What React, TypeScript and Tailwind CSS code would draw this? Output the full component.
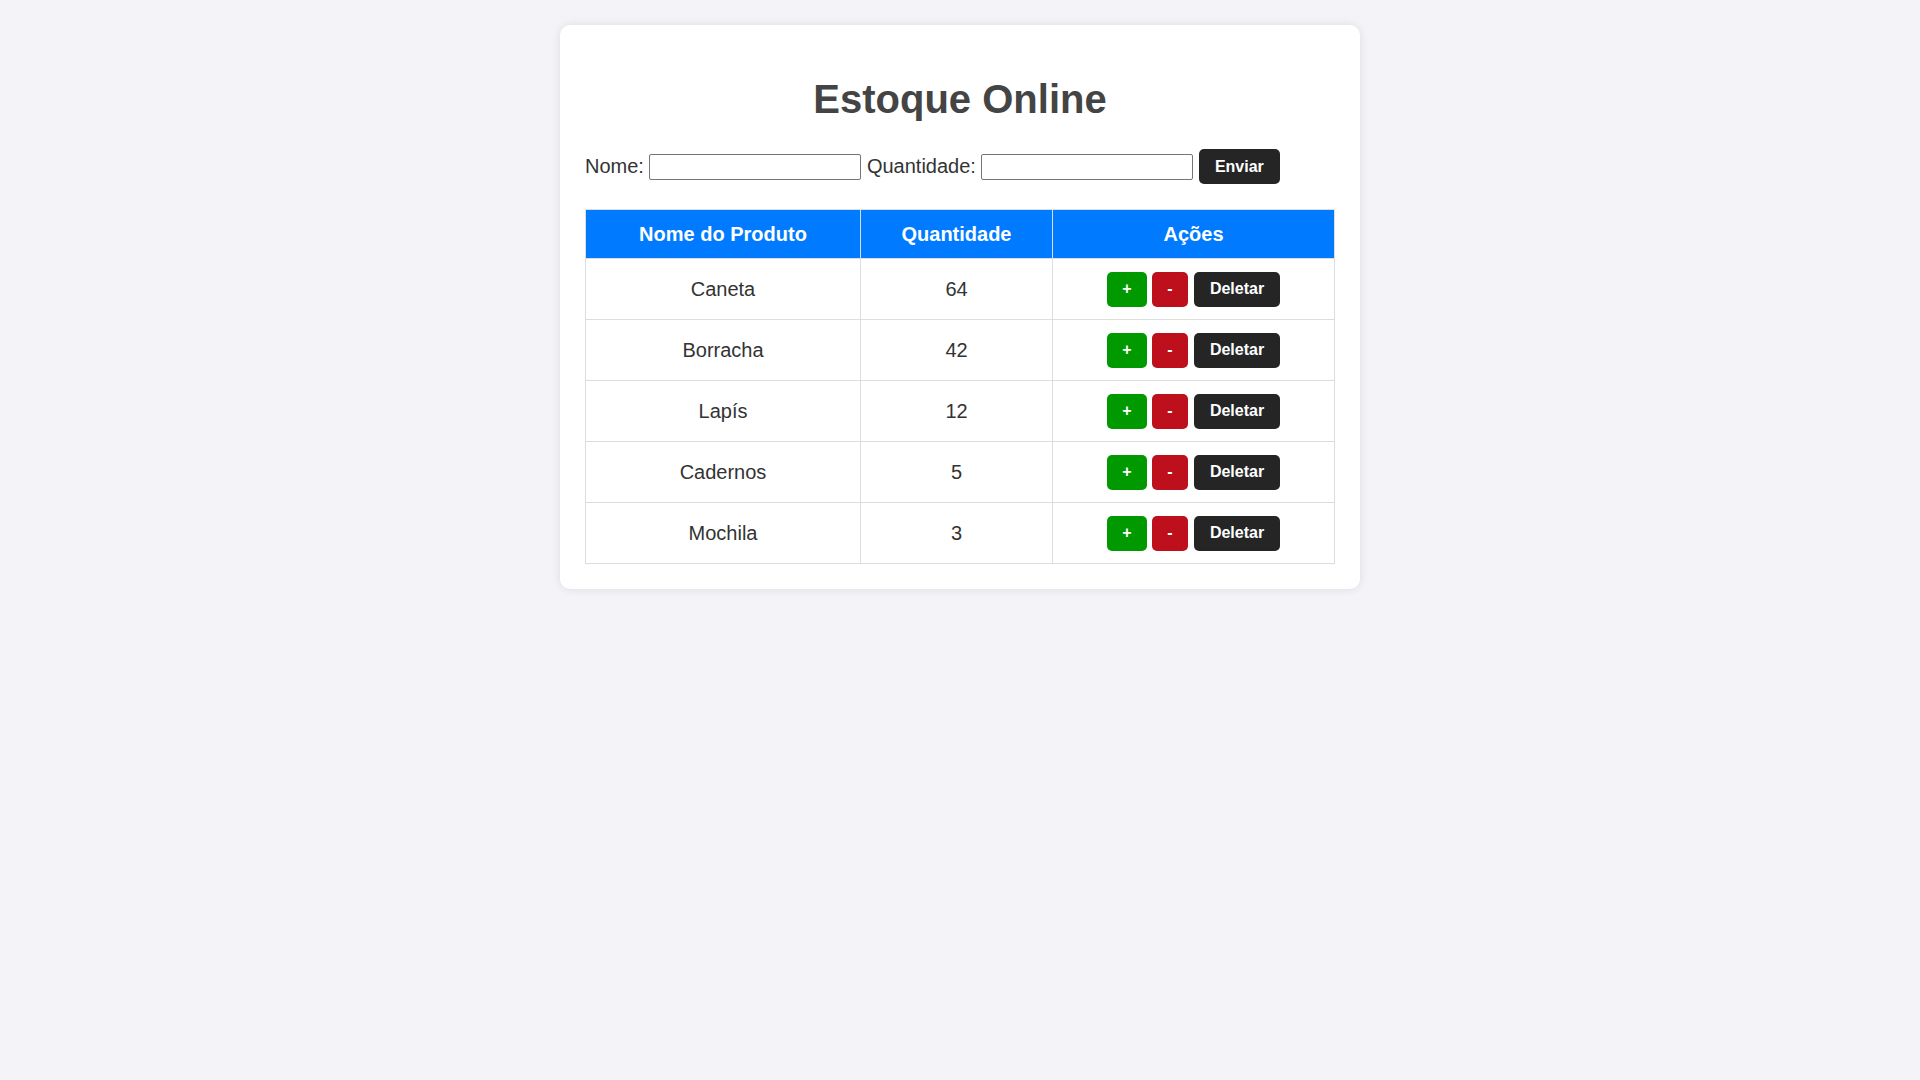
import React from "react";

const rows = [
  { nome: "Caneta", qtd: 64 },
  { nome: "Borracha", qtd: 42 },
  { nome: "Lapís", qtd: 12 },
  { nome: "Cadernos", qtd: 5 },
  { nome: "Mochila", qtd: 3 },
];

export default function App() {
  return (
    <div
      className="min-h-screen w-full bg-[#f4f4f8] pt-[25px] text-[#333]"
      style={{ fontFamily: '"Liberation Sans", Arial, sans-serif' }}
    >
      <div className="mx-auto w-[800px] rounded-[10px] bg-white p-[25px] shadow-[0_0_10px_rgba(0,0,0,0.1)]">
        <h1 className="mt-[26px] text-center text-[40px] font-bold leading-[46px] text-[#444]">
          Estoque Online
        </h1>
        <form
          className="mt-[27px] flex h-[35px] items-center text-[20px] leading-[23px]"
          onSubmit={(e) => e.preventDefault()}
        >
          <label>Nome:</label>
          <input
            type="text"
            className="ml-[5px] h-[26px] w-[212px] rounded-[2px] border border-[#767676] bg-white px-1 text-[14px]"
          />
          <label className="ml-[6px]">Quantidade:</label>
          <input
            type="text"
            className="ml-[5px] h-[26px] w-[212px] rounded-[2px] border border-[#767676] bg-white px-1 text-[14px]"
          />
          <button
            type="submit"
            className="ml-[6px] flex h-[35px] w-[81px] items-center justify-center rounded-[5px] bg-[#252525] text-[16px] font-bold text-white"
          >
            Enviar
          </button>
        </form>
        <table className="mt-[25px] w-[750px] border-collapse text-[20px]">
          <thead>
            <tr className="h-[49px] bg-[#007bff] text-white">
              <th className="w-[275px] border border-[#ddd] font-bold">Nome do Produto</th>
              <th className="w-[192px] border border-[#ddd] font-bold">Quantidade</th>
              <th className="border border-[#ddd] font-bold">Ações</th>
            </tr>
          </thead>
          <tbody>
            {rows.map((r) => (
              <tr key={r.nome} className="h-[61px]">
                <td className="border border-[#ddd] text-center">{r.nome}</td>
                <td className="border border-[#ddd] text-center">{r.qtd}</td>
                <td className="border border-[#ddd]">
                  <div className="flex items-center justify-center">
                    <button className="flex h-[35px] w-[40px] items-center justify-center rounded-[5px] bg-[#009a00] text-[16px] font-bold text-white">
                      +
                    </button>
                    <button className="ml-[5px] flex h-[35px] w-[36px] items-center justify-center rounded-[5px] bg-[#bd0f1c] text-[16px] font-bold text-white">
                      -
                    </button>
                    <button className="ml-[6px] flex h-[35px] w-[86px] items-center justify-center rounded-[5px] bg-[#252525] text-[16px] font-bold text-white">
                      Deletar
                    </button>
                  </div>
                </td>
              </tr>
            ))}
          </tbody>
        </table>
      </div>
    </div>
  );
}
